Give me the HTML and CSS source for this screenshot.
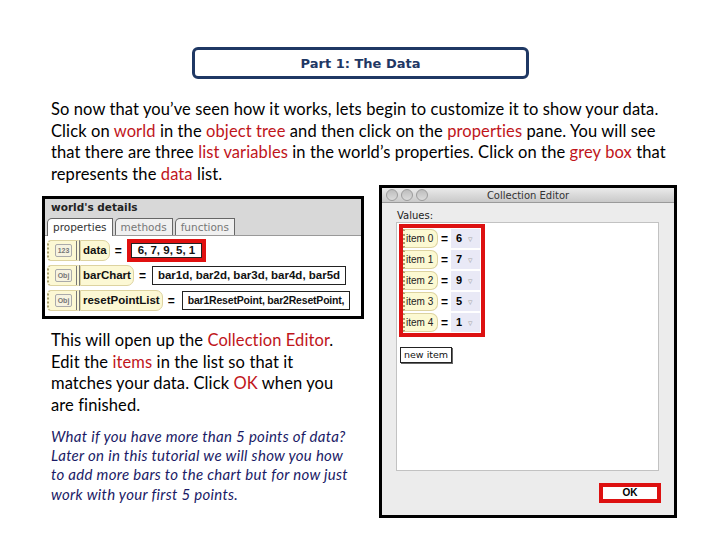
FILE: index.html
```html
<!DOCTYPE html>
<html lang="en">
<head>
    <meta charset="UTF-8">
    <title>Part 1: The Data</title>
    <link rel="stylesheet" href="styles.css">
</head>
<body>
    <div class="page">
        <!-- Slide title -->
        <div class="title-box">Part 1: The Data</div>

        <p class="intro">
            So now that you’ve seen how it works, lets begin to customize it to show your data.<br>
            Click on <span class="hl">world</span> in the <span class="hl">object tree</span> and then click on the <span class="hl">properties</span> pane. You will see<br>
            that there are three <span class="hl">list variables</span> in the world’s properties. Click on the <span class="hl">grey box</span> that<br>
            represents the <span class="hl">data</span> list.
        </p>

        <div class="columns">
            <div class="left">
                <!-- world's details screenshot -->
                <div class="details">
                    <div class="details-head">world's details</div>
                    <div class="tabs">
                        <span class="tab active">properties</span>
                        <span class="tab">methods</span>
                        <span class="tab">functions</span>
                    </div>
                    <div class="props">
                        <div class="prop">
                            <span class="tile"><span class="tag">123</span></span>
                            <span class="pill">data</span>
                            <span class="eq">=</span>
                            <span class="val marked">6, 7, 9, 5, 1</span>
                        </div>
                        <div class="prop">
                            <span class="tile"><span class="tag">Obj</span></span>
                            <span class="pill">barChart</span>
                            <span class="eq">=</span>
                            <span class="val">bar1d, bar2d, bar3d, bar4d, bar5d</span>
                        </div>
                        <div class="prop">
                            <span class="tile"><span class="tag">Obj</span></span>
                            <span class="pill">resetPointList</span>
                            <span class="eq">=</span>
                            <span class="val clipped">bar1ResetPoint, bar2ResetPoint,</span>
                        </div>
                    </div>
                </div>

                <p class="body-text">
                    This will open up the <span class="hl">Collection Editor</span>.<br>
                    Edit the <span class="hl">items</span> in the list so that it<br>
                    matches your data. Click <span class="hl">OK</span> when you<br>
                    are finished.
                </p>

                <p class="note">
                    What if you have more than 5 points of data?<br>
                    Later on in this tutorial we will show you how<br>
                    to add more bars to the chart but for now just<br>
                    work with your first 5 points.
                </p>
            </div>

            <!-- Collection Editor screenshot -->
            <div class="editor">
                <div class="titlebar">
                    <div class="lights">
                        <span class="light"></span>
                        <span class="light"></span>
                        <span class="light"></span>
                    </div>
                    <div class="win-title">Collection Editor</div>
                    <div></div>
                </div>
                <div class="editor-body">
                    <div class="values-label">Values:</div>
                    <div class="list">
                        <div class="items">
                            <div class="item"><span class="item-pill">item 0</span><span class="item-eq">=</span><span class="item-val">6<i>▿</i></span></div>
                            <div class="item"><span class="item-pill">item 1</span><span class="item-eq">=</span><span class="item-val">7<i>▿</i></span></div>
                            <div class="item"><span class="item-pill">item 2</span><span class="item-eq">=</span><span class="item-val">9<i>▿</i></span></div>
                            <div class="item"><span class="item-pill">item 3</span><span class="item-eq">=</span><span class="item-val">5<i>▿</i></span></div>
                            <div class="item"><span class="item-pill">item 4</span><span class="item-eq">=</span><span class="item-val">1<i>▿</i></span></div>
                        </div>
                        <span class="new-item">new item</span>
                    </div>
                    <div class="ok-row">
                        <span class="ok-btn">OK</span>
                    </div>
                </div>
            </div>
        </div>
    </div>
</body>
</html>
```

FILE: styles.css
```css
* {
    margin: 0;
    padding: 0;
    box-sizing: border-box;
}

body {
    background: #fff;
    font-family: 'Lato', 'Open Sans', sans-serif;
    color: #000;
}

.page {
    width: 720px;
    height: 540px;
    padding-top: 47px;
    overflow: hidden;
}

/* Title */
.title-box {
    margin-left: 192px;
    width: 337px;
    height: 32px;
    border: 3px solid #1f3864;
    border-radius: 6px;
    display: flex;
    align-items: center;
    justify-content: center;
    font-family: 'DejaVu Sans', sans-serif;
    font-weight: bold;
    font-size: 13px;
    color: #1f3864;
}

.hl {
    color: #c0151b;
}

.intro {
    margin: 20px 0 0 51px;
    font-size: 16.5px;
    letter-spacing: 0.1px;
    line-height: 21.5px;
    white-space: nowrap;
}

/* Two columns */
.columns {
    display: flex;
    margin: 0 0 0 42px;
    gap: 15px;
}

.left {
    width: 322px;
    padding-top: 11px;
}

/* world's details */
.details {
    width: 322px;
    height: 123px;
    border: 3px solid #000;
    background: #fff;
    overflow: hidden;
    font-family: 'Liberation Sans', Arial, sans-serif;
}

.details-head {
    height: 18px;
    line-height: 17px;
    padding-left: 6px;
    background: #d8d8d8;
    font-family: 'DejaVu Sans', sans-serif;
    font-weight: bold;
    font-size: 10.5px;
    color: #222;
}

.tabs {
    height: 19px;
    background: #d8d8d8;
    display: flex;
    align-items: flex-end;
    gap: 2px;
    padding-left: 2px;
    border-bottom: 1px solid #999;
}

.tab {
    height: 17px;
    padding: 0 5px;
    border: 1px solid #666;
    border-bottom: none;
    border-top-left-radius: 5px;
    background: #f0f0f0;
    font-family: 'DejaVu Sans', sans-serif;
    font-size: 10.5px;
    line-height: 16px;
    color: #777;
}

.tab.active {
    background: #fff;
    color: #333;
    height: 18px;
    margin-bottom: -1px;
}

.props {
    padding: 3px 0 0 2px;
    display: flex;
    flex-direction: column;
    gap: 2px;
}

.prop {
    height: 23px;
    display: flex;
    align-items: center;
    white-space: nowrap;
}

.tile {
    flex: none;
    width: 33px;
    height: 21px;
    display: flex;
    align-items: center;
    padding-left: 6px;
    background: #fcf8d4;
    border: 1px solid #ddd3a0;
    border-left: 2px dotted #a89f70;
    border-right: 4px double #777;
    border-radius: 4px 0 0 4px;
}

.tag {
    width: 17px;
    height: 13px;
    border: 1px solid #aaa;
    border-radius: 2px;
    background: #f6f3e0;
    font-size: 7px;
    font-weight: bold;
    line-height: 11px;
    text-align: center;
    color: #777;
}

.pill {
    flex: none;
    height: 21px;
    line-height: 19px;
    padding: 0 2px 0 2px;
    background: #fcf8d4;
    border: 1px solid #ddd3a0;
    border-radius: 0 7px 7px 0;
    font-weight: bold;
    font-size: 11.5px;
    color: #111;
}

.eq {
    flex: none;
    margin: 0 6px 0 5px;
    font-weight: bold;
    font-size: 12px;
}

.val {
    flex: none;
    height: 19px;
    line-height: 17px;
    padding: 0 5px;
    border: 1px solid #222;
    background: #fff;
    font-weight: bold;
    font-size: 11.5px;
    color: #111;
}

.val.marked {
    height: 23px;
    line-height: 15px;
    border: 4px solid #e01010;
    box-shadow: inset 0 0 0 1px #222;
    padding: 0 7px;
    margin-left: -1px;
}

.val.clipped {
    margin-left: 1px;
    font-size: 10.5px;
    letter-spacing: -0.2px;
}

/* Text below */
.body-text {
    margin: 11px 0 0 9px;
    font-size: 16.5px;
    letter-spacing: 0.1px;
    line-height: 21.7px;
    white-space: nowrap;
}

.note {
    margin: 10px 0 0 9px;
    font-size: 15px;
    letter-spacing: 0.3px;
    font-style: italic;
    line-height: 19.3px;
    color: #1a1a66;
    white-space: nowrap;
}

/* Collection Editor */
.editor {
    width: 298px;
    height: 333px;
    border: 3px solid #000;
    background: #ececec;
    font-family: 'Liberation Sans', Arial, sans-serif;
    display: flex;
    flex-direction: column;
}

.titlebar {
    height: 15px;
    display: grid;
    grid-template-columns: 1fr auto 1fr;
    align-items: center;
    background: linear-gradient(#eaeaea, #c9c9c9);
    border-bottom: 1px solid #9a9a9a;
}

.lights {
    display: flex;
    gap: 3px;
    padding-left: 4px;
}

.light {
    width: 12px;
    height: 12px;
    border-radius: 50%;
    background: linear-gradient(#bdbdbd, #dcdcdc);
    border: 1px solid #9c9c9c;
}

.win-title {
    font-family: 'DejaVu Sans', sans-serif;
    font-size: 10px;
    color: #333;
}

.editor-body {
    flex: 1;
    padding: 7px 0 0 14px;
    display: flex;
    flex-direction: column;
}

.values-label {
    padding-left: 1px;
    font-family: 'DejaVu Sans', sans-serif;
    font-size: 10px;
    color: #222;
    height: 12px;
}

.list {
    width: 263px;
    height: 249px;
    background: #fff;
    border: 1px solid #c2c2c2;
    padding: 1px 0 0 2px;
}

.items {
    width: 86px;
    height: 113px;
    border: 4px solid #dd1111;
    display: flex;
    flex-direction: column;
}

.item {
    height: 21px;
    display: flex;
    align-items: center;
}

.item-pill {
    flex: none;
    width: 35px;
    height: 19px;
    line-height: 17px;
    padding-left: 1px;
    background: #fcf9d2;
    border: 1px solid #ddd3a0;
    border-left: 2px dotted #a89f70;
    border-radius: 0 7px 7px 0;
    font-size: 10px;
    color: #222;
    white-space: nowrap;
    overflow: hidden;
}

.item-eq {
    flex: none;
    width: 13px;
    text-align: center;
    font-weight: bold;
    font-size: 12px;
}

.item-val {
    flex: none;
    width: 29px;
    height: 19px;
    line-height: 19px;
    padding-left: 5px;
    background: #e9e9f6;
    font-weight: bold;
    font-size: 11px;
}

.item-val i {
    font-style: normal;
    font-weight: normal;
    color: #aaa;
    font-size: 9px;
    margin-left: 6px;
}

.new-item {
    display: inline-block;
    margin: 10px 0 0 1px;
    height: 16px;
    line-height: 14px;
    padding: 0 3px;
    border: 1px solid #222;
    box-shadow: 1px 1px 0 #666;
    background: #fff;
    font-family: 'DejaVu Sans', sans-serif;
    font-size: 9.5px;
    color: #111;
}

.ok-row {
    display: flex;
    justify-content: flex-end;
    padding: 12px 13px 0 0;
}

.ok-btn {
    width: 62px;
    height: 20px;
    border: 4px solid #dd1111;
    background: #fff;
    text-align: center;
    line-height: 12px;
    font-weight: bold;
    font-size: 10px;
}
```
